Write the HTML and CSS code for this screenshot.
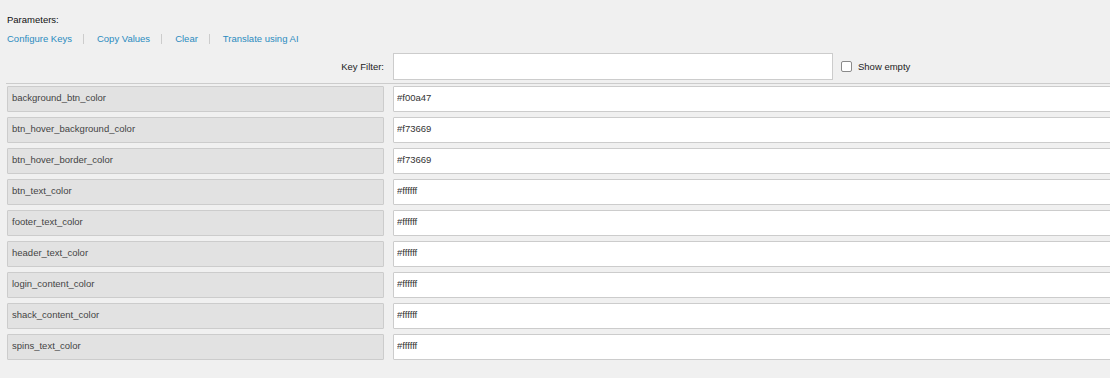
FILE: index.html
```html
<!DOCTYPE html>
<html lang="en">
<head>
    <meta charset="UTF-8">
    <meta name="viewport" content="width=device-width, initial-scale=1.0">
    <title>Parameters</title>
    <link rel="stylesheet" href="styles.css">
</head>
<body>
  <div class="params">
    <div class="params-title">Parameters:</div>

    <!-- Actions -->
    <div class="actions">
      <a href="#">Configure Keys</a>
      <span class="sep"></span>
      <a href="#">Copy Values</a>
      <span class="sep"></span>
      <a href="#">Clear</a>
      <span class="sep"></span>
      <a href="#">Translate using AI</a>
    </div>

    <!-- Filter -->
    <div class="filter-row">
      <label class="filter-label" for="keyFilter">Key Filter:</label>
      <div class="filter-controls">
        <input type="text" id="keyFilter" class="filter-input" />
        <label class="show-empty"><input type="checkbox" /> Show empty</label>
      </div>
    </div>

    <!-- Key / value rows -->
    <div class="rows">
      <div class="key">background_btn_color</div>
      <input class="value" type="text" value="#f00a47" />
      <div class="key">btn_hover_background_color</div>
      <input class="value" type="text" value="#f73669" />
      <div class="key">btn_hover_border_color</div>
      <input class="value" type="text" value="#f73669" />
      <div class="key">btn_text_color</div>
      <input class="value" type="text" value="#ffffff" />
      <div class="key">footer_text_color</div>
      <input class="value" type="text" value="#ffffff" />
      <div class="key">header_text_color</div>
      <input class="value" type="text" value="#ffffff" />
      <div class="key">login_content_color</div>
      <input class="value" type="text" value="#ffffff" />
      <div class="key">shack_content_color</div>
      <input class="value" type="text" value="#ffffff" />
      <div class="key">spins_text_color</div>
      <input class="value" type="text" value="#ffffff" />
    </div>
  </div>
</body>
</html>
```

FILE: styles.css
```css
/* Global */
html, body {
    margin: 0;
    padding: 0;
    overflow: hidden;
    background-color: #f0f0f0;
}

body {
    font-family: "Liberation Sans", Arial, sans-serif;
    font-size: 9.5px;
    line-height: 12px;
    color: #222;
}

.params {
    width: 1106px;
    padding: 14px 0 0 6px;
}

.params-title {
    padding-left: 1px;
    color: #111;
}

/* Actions */
.actions {
    display: flex;
    align-items: center;
    margin-top: 7px;
    padding-left: 1px;
}

.actions a {
    color: #2b8bbf;
    text-decoration: none;
}

.actions .sep {
    width: 1px;
    height: 10px;
    background-color: #ccc;
    margin: 0 13px 0 11px;
}

/* Filter */
.filter-row {
    display: grid;
    grid-template-columns: 378px 1fr;
    column-gap: 9px;
    align-items: center;
    margin-top: 8px;
    padding-bottom: 3px;
    border-bottom: 1px solid #ccc;
}

.filter-label {
    text-align: right;
    color: #222;
}

.filter-controls {
    display: flex;
    align-items: center;
}

.filter-input {
    box-sizing: border-box;
    width: 440px;
    height: 27px;
    margin: 0;
    border: 1px solid #ccc;
    background: #fff;
    font: inherit;
}

.show-empty {
    display: flex;
    align-items: center;
    margin-left: 8px;
    color: #222;
}

.show-empty input {
    appearance: none;
    box-sizing: border-box;
    width: 11px;
    height: 11px;
    margin: 0 6px 0 0;
    border: 1px solid #8a8a8a;
    border-radius: 2px;
    background: #fff;
}

/* Rows */
.rows {
    display: grid;
    grid-template-columns: 377px 1fr;
    column-gap: 9px;
    row-gap: 5px;
    margin-top: 2px;
    padding-left: 1px;
}

.key {
    box-sizing: border-box;
    height: 26px;
    padding: 5px 4px 3px;
    border: 1px solid #ccc;
    border-radius: 1px;
    background-color: #e2e2e2;
    color: #444;
}

.value {
    box-sizing: border-box;
    height: 26px;
    margin: 0;
    padding: 4px 3px 8px;
    border: 1px solid #ccc;
    border-radius: 1px;
    background: #fff;
    font: inherit;
    color: #333;
    outline: none;
}
```
